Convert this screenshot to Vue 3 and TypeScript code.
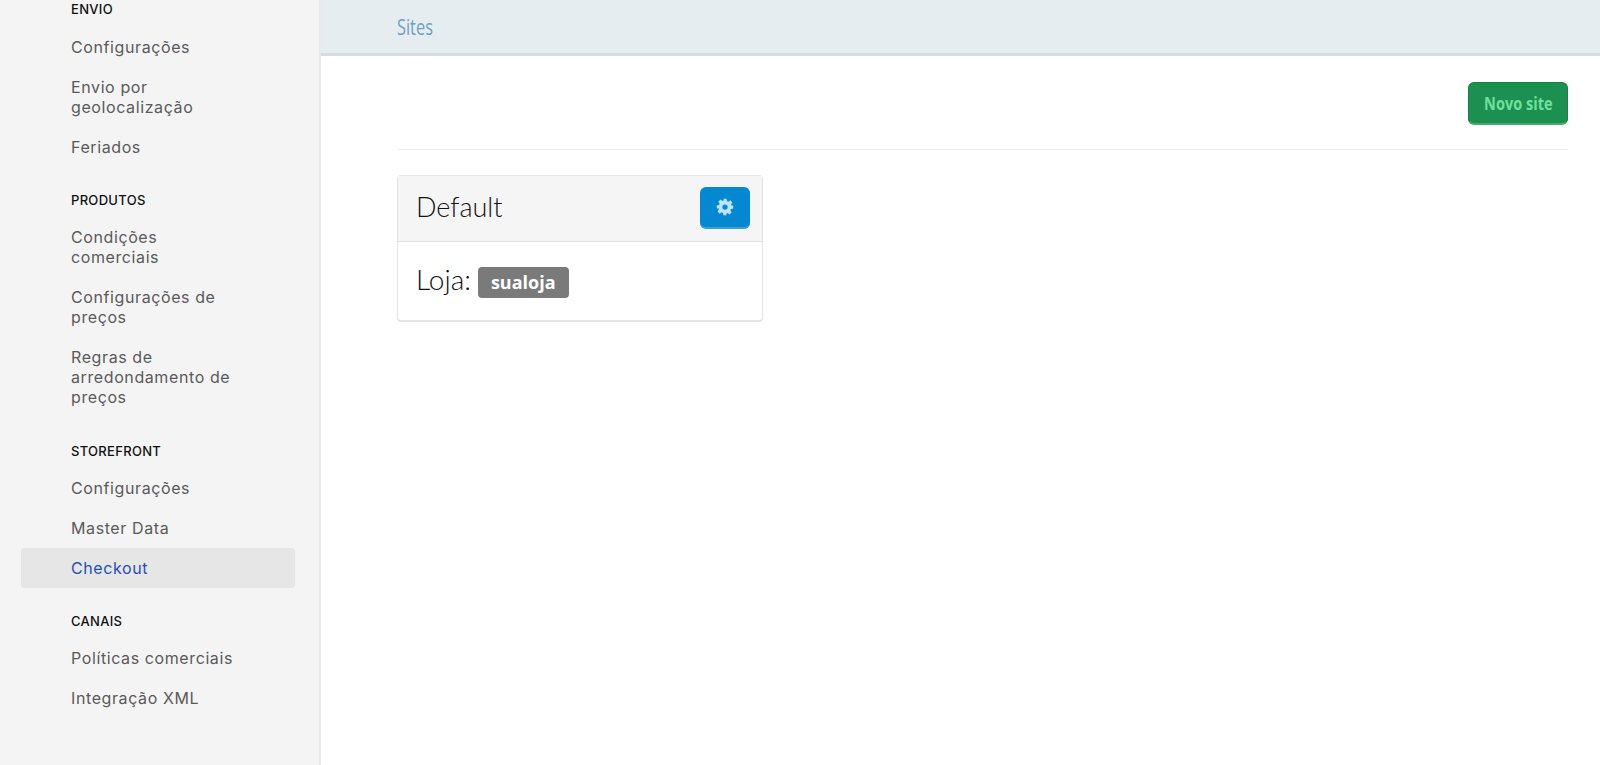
<script setup lang="ts">
interface Group { title: string; items: { label: string; active?: boolean }[] }
const groups: Group[] = [
  { title: 'ENVIO', items: [{ label: 'Configurações' }, { label: 'Envio por geolocalização' }, { label: 'Feriados' }] },
  { title: 'PRODUTOS', items: [{ label: 'Condições comerciais' }, { label: 'Configurações de preços' }, { label: 'Regras de arredondamento de preços' }] },
  { title: 'STOREFRONT', items: [{ label: 'Configurações' }, { label: 'Master Data' }, { label: 'Checkout', active: true }] },
  { title: 'CANAIS', items: [{ label: 'Políticas comerciais' }, { label: 'Integração XML' }] },
]
</script>

<template>
  <div class="page">
    <aside class="sidebar">
      <section v-for="g in groups" :key="g.title" class="group">
        <h4 class="group-title">{{ g.title }}</h4>
        <a v-for="it in g.items" :key="it.label" class="item" :class="{ active: it.active }"><span class="item-text">{{ it.label }}</span></a>
      </section>
    </aside>
    <main class="main">
      <header class="topbar"><span class="crumb">Sites</span></header>
      <div class="content">
        <div class="actions"><button class="btn-new"><span class="btn-new-label">Novo site</span></button></div>
        <div class="card">
          <div class="card-head">
            <span class="card-title">Default</span>
            <button class="btn-gear" aria-label="Configurar">
              <svg width="18" height="18" viewBox="0 0 24 24"><path fill="#bfe3fb" fill-rule="evenodd" d="M10 1h4l.6 3.1 1.9.8 2.6-1.8 2.8 2.8-1.8 2.6.8 1.9L23 10v4l-3.1.6-.8 1.9 1.8 2.6-2.8 2.8-2.6-1.8-1.9.8L14 23h-4l-.6-3.1-1.9-.8-2.6 1.8-2.8-2.8 1.8-2.6-.8-1.9L1 14v-4l3.1-.6.8-1.9-1.8-2.6 2.8-2.8 2.6 1.8 1.9-.8zM12 8.5a3.5 3.5 0 1 0 0 7 3.5 3.5 0 0 0 0-7z"/></svg>
            </button>
          </div>
          <div class="card-body">
            <span class="loja">Loja:</span>
            <span class="badge">sualoja</span>
          </div>
        </div>
      </div>
    </main>
  </div>
</template>

<style scoped>
.page { display: flex; width: 1600px; height: 765px; overflow: hidden; background: #fff; }
.sidebar { width: 321px; flex: none; box-sizing: border-box; padding: 0 21px; background: #f4f4f4; border-right: 2px solid #e9e9e9; font-family: Inter, sans-serif; }
.group { margin-bottom: 24.4px; }
.group-title { margin: 0 0 8px; padding-left: 50px; height: 18px; line-height: 18px; font-size: 13px; font-weight: 500; letter-spacing: .3px; color: #111; }
.group:first-child .group-title { margin-bottom: 9px; }
.item { display: block; padding: 10px 54px 10px 50px; box-sizing: border-box; line-height: 20px; font-size: 16px; color: #5a5a5a; border-radius: 4px; letter-spacing: .6px; width: 274px; }
.item.active { background: #e6e6e6; color: #1f4fb8; }
.main { flex: 1; min-width: 0; }
.topbar { height: 53px; background: #e6edf1; border-bottom: 3px solid #d3dde2; display: flex; align-items: center; padding-left: 76px; }
.crumb { display: inline-block; font-family: "Open Sans", sans-serif; font-size: 21px; color: #6f9fc4; transform: scaleX(.78); transform-origin: left center; }
.content { padding: 26px 32px 0 76px; }
.actions { display: flex; justify-content: flex-end; padding-bottom: 24px; border-bottom: 1px solid #eee; margin-bottom: 25px; }
.btn-new { width: 100px; height: 43px; background: #1b9050; color: #6fe09c; border: 1px solid #168045; border-bottom: 2px solid #4aa873; border-radius: 6px; padding: 0; font-family: "Open Sans", sans-serif; font-weight: 700; font-size: 18px; }
.btn-new-label { display: inline-block; transform: scaleX(.81); white-space: nowrap; }
.card { width: 366px; box-sizing: border-box; border: 1px solid #e4e4e4; border-bottom-width: 2px; border-radius: 4px; }
.card-head { display: flex; align-items: flex-start; justify-content: space-between; height: 66px; box-sizing: border-box; padding: 11px 12px 0 18px; background: #f5f5f5; border-bottom: 1px solid #e2e2e2; }
.card-title { font-family: Lato, sans-serif; font-weight: 300; font-size: 27px; line-height: 40px; color: #111; }
.btn-gear { width: 50px; height: 42px; display: flex; align-items: center; justify-content: center; background: #0488d1; border: none; border-bottom: 2px solid #3aa0da; border-radius: 6px; padding: 0; }
.card-body { display: flex; align-items: flex-start; height: 78px; box-sizing: border-box; padding: 25px 18px 0; gap: 7px; }
.loja { font-family: Lato, sans-serif; font-weight: 300; font-size: 28px; line-height: 30px; margin-top: -3px; color: #111; }
.badge { display: inline-block; background: #7a7a7a; color: #fff; font-family: "Open Sans", sans-serif; font-weight: 700; font-size: 18px; line-height: 31px; padding: 0 13px; border-radius: 4px; }
</style>
